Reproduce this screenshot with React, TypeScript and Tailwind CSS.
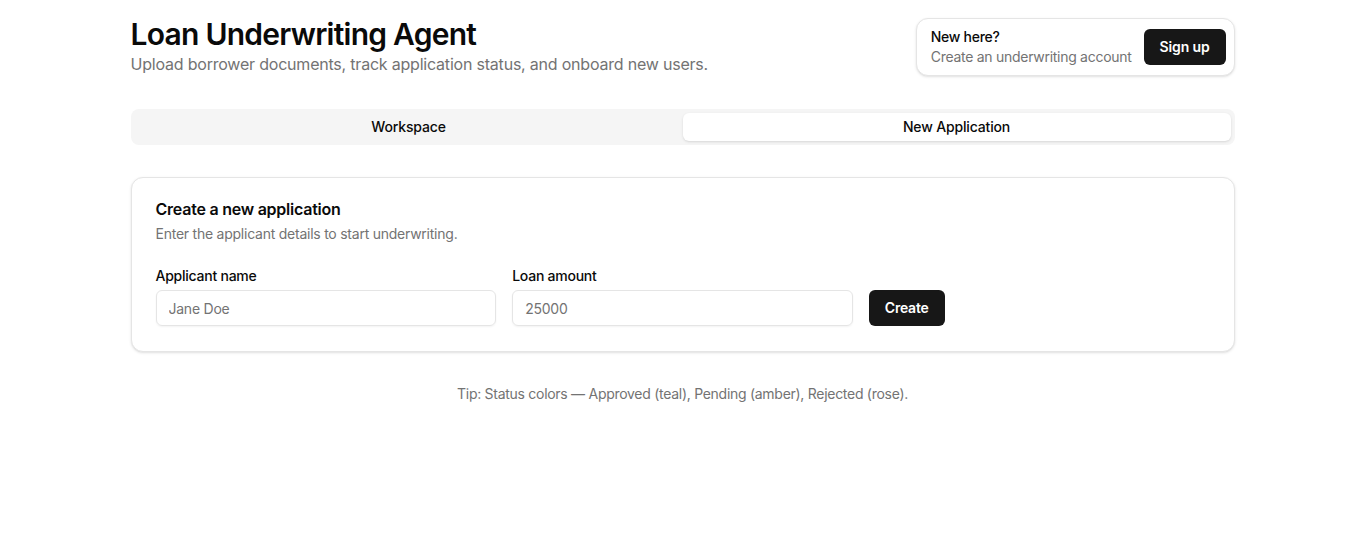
import React from 'react'

export default function App() {
  return (
    <div className="min-h-screen bg-white text-[#0a0a0a]" style={{ fontFamily: 'Inter, "Noto Sans", sans-serif' }}>
      <div className="mx-auto max-w-6xl px-6 pt-4">
        {/* Header */}
        <div className="flex items-start justify-between">
          <div>
            <h1 className="text-3xl font-semibold tracking-tight">Loan Underwriting Agent</h1>
            <p className="text-base tracking-[-0.013em] text-[#737373]">
              Upload borrower documents, track application status, and onboard new users.
            </p>
          </div>
          <div className="mt-0.5 flex items-center gap-3 rounded-xl border border-[#e5e5e5] bg-white py-2 pl-3.5 pr-2 shadow-sm">
            <div className="text-sm leading-5 tracking-[-0.02em]">
              <div className="font-medium">New here?</div>
              <div className="text-[#737373]">Create an underwriting account</div>
            </div>
            <button className="h-9 rounded-md bg-[#171717] px-4 text-sm font-semibold tracking-[-0.01em] text-white">Sign up</button>
          </div>
        </div>

        {/* Tabs */}
        <div className="mt-[33px] grid h-9 grid-cols-2 rounded-lg bg-[#f5f5f5] p-1 tracking-[-0.01em]">
          <button className="rounded-md text-sm font-medium">Workspace</button>
          <button className="rounded-md bg-white text-sm font-medium shadow-sm">New Application</button>
        </div>

        {/* Card */}
        <div className="mt-8 rounded-xl border border-[#e5e5e5] bg-white px-6 pb-[25px] pt-[23px] shadow-sm tracking-[-0.015em]">
          <h2 className="text-base font-semibold leading-none">Create a new application</h2>
          <p className="mt-[7px] text-sm text-[#737373]">Enter the applicant details to start underwriting.</p>
          <div className="mt-[22px] grid grid-cols-3 items-end gap-4">
            <label className="flex flex-col gap-1">
              <span className="text-sm font-medium">Applicant name</span>
              <input
                className="h-9 rounded-md border border-[#e5e5e5] px-3 text-sm shadow-xs outline-none placeholder:text-[#737373]"
                placeholder="Jane Doe"
              />
            </label>
            <label className="flex flex-col gap-1">
              <span className="text-sm font-medium">Loan amount</span>
              <input
                className="h-9 rounded-md border border-[#e5e5e5] px-3 text-sm shadow-xs outline-none placeholder:text-[#737373]"
                placeholder="25000"
              />
            </label>
            <div>
              <button className="h-9 rounded-md bg-[#171717] px-4 text-sm font-semibold text-white">Create</button>
            </div>
          </div>
        </div>

        <p className="mt-8 text-center text-sm tracking-[-0.02em] text-[#737373]">
          Tip: Status colors — Approved (teal), Pending (amber), Rejected (rose).
        </p>
      </div>
    </div>
  )
}
